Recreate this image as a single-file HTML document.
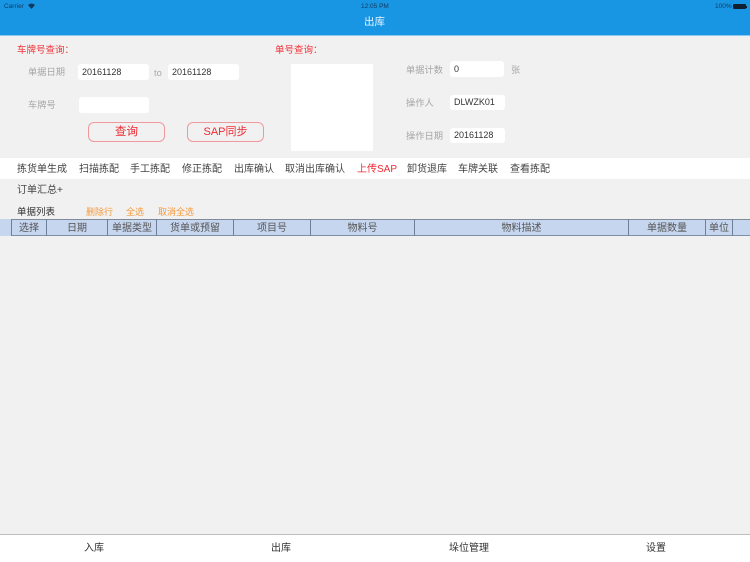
<!DOCTYPE html>
<html lang="zh">
<head>
<meta charset="utf-8">
<style>
html,body{margin:0;padding:0;}
body{width:750px;height:562px;position:relative;overflow:hidden;background:#f1f1f1;font-family:"Liberation Sans","Noto Sans CJK SC",sans-serif;color:#333;}
.a{position:absolute;white-space:nowrap;}
.t{font-size:9.25px;line-height:14px;}
.g{color:#a6a6a6;}
.r{color:#f0323a;font-size:9.5px;}
.o{color:#f59a3c;font-size:9px;line-height:12px;}
.i{position:absolute;background:#fff;border-radius:3px;font-size:9px;line-height:16px;color:#333;box-sizing:border-box;padding-left:4px;}
.b{position:absolute;box-sizing:border-box;border:1px solid #ee9a9c;border-radius:6px;color:#ee2b33;text-align:center;}
.m{font-size:10px;line-height:14px;color:#444;top:163px;}
.h{position:absolute;top:219px;height:17px;box-sizing:border-box;border-left:1px solid #6d7f99;font-size:10px;line-height:19px;text-align:center;color:#555;}
.f{font-size:10px;line-height:14px;color:#333;top:542px;}
</style>
</head>
<body>
<div class="a" style="left:0;top:0;width:750px;height:35px;background:#1896e4;"></div>
<div class="a" style="left:0;top:35px;width:750px;height:1px;background:#8cc8ef;"></div>
<div class="a" style="left:4px;top:3px;font-size:6.5px;line-height:8px;color:#123a5c;">Carrier</div>
<svg class="a" style="left:28px;top:3px;" width="7" height="6" viewBox="0 0 7 6"><path d="M0 2 Q3.5 -1 7 2 L3.5 6 Z" fill="#123a5c"/></svg>
<div class="a" style="left:361px;top:3px;font-size:6.5px;line-height:8px;color:#123a5c;">12:05 PM</div>
<div class="a" style="left:715px;top:3px;font-size:6.5px;line-height:8px;color:#123a5c;">100%</div>
<div class="a" style="left:733px;top:4px;width:13px;height:5px;background:#10202e;border-radius:1px;"></div>
<div class="a" style="left:746px;top:5.5px;width:1px;height:2px;background:#10202e;"></div>
<div class="a" style="left:364px;top:15px;font-size:10.5px;line-height:15px;color:#e8f4fc;">出库</div>

<div class="a t r" style="left:17px;top:44px;">车牌号查询：</div>
<div class="a t r" style="left:275px;top:44px;">单号查询：</div>

<div class="a t g" style="left:28px;top:65px;">单据日期</div>
<div class="i" style="left:78px;top:64px;width:71px;height:16px;">20161128</div>
<div class="a t g" style="left:154px;top:66px;">to</div>
<div class="i" style="left:168px;top:64px;width:71px;height:16px;">20161128</div>
<div class="a t g" style="left:28px;top:98px;">车牌号</div>
<div class="i" style="left:79px;top:97px;width:70px;height:16px;"></div>
<div class="b" style="left:88px;top:122px;width:77px;height:20px;font-size:11.5px;line-height:19px;">查询</div>
<div class="b" style="left:187px;top:122px;width:77px;height:20px;font-size:11px;line-height:19px;">SAP同步</div>
<div class="a" style="left:291px;top:64px;width:82px;height:87px;background:#fff;"></div>

<div class="a t g" style="left:406px;top:63px;">单据计数</div>
<div class="i" style="left:450px;top:61px;width:54px;height:16px;">0</div>
<div class="a t g" style="left:511px;top:63px;">张</div>
<div class="a t g" style="left:406px;top:96px;">操作人</div>
<div class="i" style="left:450px;top:95px;width:55px;height:15px;line-height:15px;">DLWZK01</div>
<div class="a t g" style="left:406px;top:129px;">操作日期</div>
<div class="i" style="left:450px;top:128px;width:55px;height:15px;line-height:15px;">20161128</div>

<div class="a" style="left:0;top:158px;width:750px;height:21px;background:#fff;"></div>
<div class="a m" style="left:17px;">拣货单生成</div>
<div class="a m" style="left:79px;">扫描拣配</div>
<div class="a m" style="left:130px;">手工拣配</div>
<div class="a m" style="left:182px;">修正拣配</div>
<div class="a m" style="left:234px;">出库确认</div>
<div class="a m" style="left:285px;">取消出库确认</div>
<div class="a m" style="left:357px;color:#ee2b33;">上传SAP</div>
<div class="a m" style="left:407px;">卸货退库</div>
<div class="a m" style="left:458px;">车牌关联</div>
<div class="a m" style="left:510px;">查看拣配</div>
<div class="a m" style="left:17px;top:184px;">订单汇总+</div>

<div class="a" style="left:17px;top:206px;font-size:9.5px;line-height:13px;color:#333;">单据列表</div>
<div class="a o" style="left:86px;top:206px;">删除行</div>
<div class="a o" style="left:126px;top:206px;">全选</div>
<div class="a o" style="left:158px;top:206px;">取消全选</div>

<div class="a" style="left:0;top:219px;width:750px;height:17px;background:#c6d6ee;"></div>
<div class="a" style="left:11px;top:219px;width:739px;height:1px;background:#7f8a9a;"></div>
<div class="a" style="left:11px;top:235px;width:739px;height:1px;background:#7f8fa8;"></div>
<div class="h" style="left:11px;width:35px;">选择</div>
<div class="h" style="left:46px;width:61px;">日期</div>
<div class="h" style="left:107px;width:49px;">单据类型</div>
<div class="h" style="left:156px;width:77px;">货单或预留</div>
<div class="h" style="left:233px;width:77px;">项目号</div>
<div class="h" style="left:310px;width:104px;">物料号</div>
<div class="h" style="left:414px;width:214px;">物料描述</div>
<div class="h" style="left:628px;width:77px;">单据数量</div>
<div class="h" style="left:705px;width:27px;">单位</div>
<div class="h" style="left:732px;width:18px;"></div>

<div class="a" style="left:0;top:534px;width:750px;height:28px;background:#fff;border-top:1px solid #bdbdbd;box-sizing:border-box;"></div>
<div class="a f" style="left:84px;">入库</div>
<div class="a f" style="left:271px;">出库</div>
<div class="a f" style="left:449px;">垛位管理</div>
<div class="a f" style="left:646px;">设置</div>
</body>
</html>
